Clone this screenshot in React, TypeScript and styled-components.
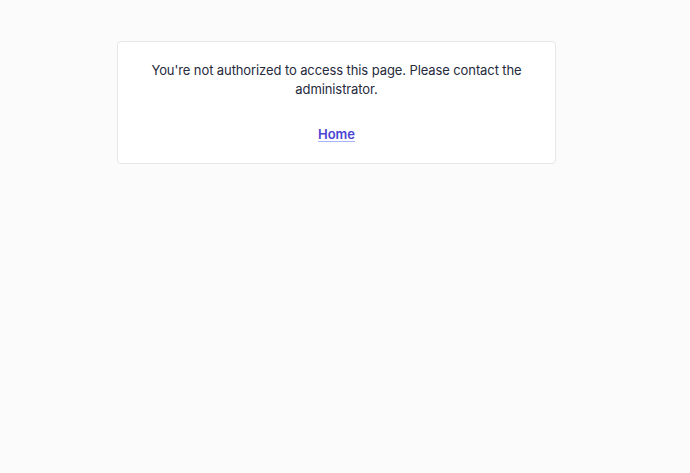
import { createGlobalStyle, styled } from "styled-components"

const GlobalStyle = createGlobalStyle`
    html, body {
        margin: 0;
        padding: 0;
        background-color: #fbfbfb;
    }
`

const Page = styled.main`
    min-height: 473px;
    padding: 41px 0 0 117px;
    box-sizing: border-box;
    font-family: 'Inter', sans-serif;
`

const Card = styled.section`
    width: 439px;
    box-sizing: border-box;
    background-color: #fff;
    border: 1px solid #e5e7eb;
    border-radius: 4px;
    padding: 19px 32px 19px;
    display: flex;
    flex-direction: column;
    align-items: center;
    gap: 25px;
`

const Message = styled.p`
    margin: 0;
    font-family: 'Inter', sans-serif;
    font-size: 13px;
    letter-spacing: -0.1px;
    line-height: 19px;
    color: #262a3b;
    text-align: center;
`

const HomeLink = styled.a`
    font-family: 'Inter', sans-serif;
    font-size: 13px;
    line-height: 20px;
    font-weight: 600;
    color: #4a45d2;
    text-decoration: underline;
    text-decoration-color: #a5b4fc;
    text-underline-offset: 2px;
    cursor: pointer;
`

export default function App() {
    return (
        <>
            <GlobalStyle />
            <Page>
                <Card>
                    <Message>
                        You're not authorized to access this page. Please contact the administrator.
                    </Message>
                    <HomeLink href="#">Home</HomeLink>
                </Card>
            </Page>
        </>
    )
}
